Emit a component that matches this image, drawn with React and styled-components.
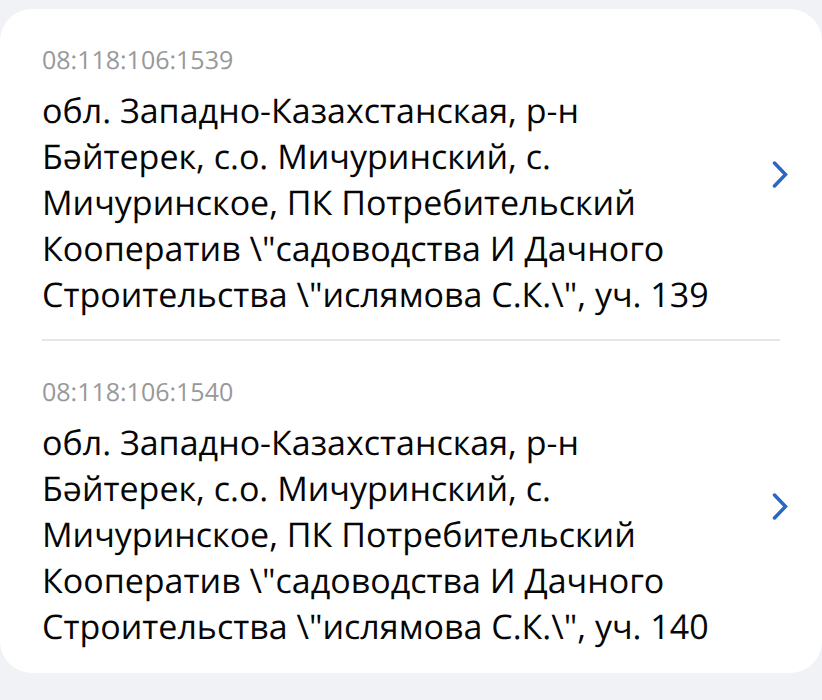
import React from "react";
import styled, { createGlobalStyle } from "styled-components";

const GlobalStyle = createGlobalStyle`
  *, *::before, *::after { box-sizing: border-box; }
  body {
    margin: 0;
    background: #f0f2f6;
    font-family: "Open Sans", "Noto Sans", sans-serif;
    color: #060607;
    text-rendering: geometricPrecision;
  }
`;

const Page = styled.main`
  padding: 9px 0 27px;
`;

const Card = styled.ul`
  margin: 0;
  padding: 0 42px 2px;
  list-style: none;
  background: #ffffff;
  border-radius: 32px;
`;

const Item = styled.li`
  & + & {
    border-top: 2px solid #e6e6e6;
  }
`;

const Row = styled.a`
  display: flex;
  align-items: center;
  justify-content: space-between;
  margin-right: -8px;
  color: inherit;
  text-decoration: none;
`;

const Details = styled.div`
  flex: 1;
  max-width: 680px;
  padding: 34px 0 22px;
`;

const Code = styled.div`
  margin-bottom: 10px;
  font-size: 25px;
  line-height: 34px;
  color: #98989a;
`;

const Address = styled.div`
  font-size: 34px;
  line-height: 46px;
`;

const Chevron = styled.svg`
  flex: none;
  width: 16px;
  height: 28px;
  fill: none;
  stroke: #2868c4;
  stroke-width: 3.5;
  stroke-linecap: round;
`;

const parcels = [
  {
    code: "08:118:106:1539",
    address:
      'обл. Западно-Казахстанская, р-н Бәйтерек, с.о. Мичуринский, с. Мичуринское, ПК Потребительский Кооператив \\"садоводства И Дачного Строительства \\"ислямова С.К.\\", уч. 139',
  },
  {
    code: "08:118:106:1540",
    address:
      'обл. Западно-Казахстанская, р-н Бәйтерек, с.о. Мичуринский, с. Мичуринское, ПК Потребительский Кооператив \\"садоводства И Дачного Строительства \\"ислямова С.К.\\", уч. 140',
  },
];

export default function App() {
  return (
    <>
      <GlobalStyle />
      <Page>
        <Card>
          {parcels.map((parcel) => (
            <Item key={parcel.code}>
              <Row href={`#${parcel.code}`}>
                <Details>
                  <Code>{parcel.code}</Code>
                  <Address>{parcel.address}</Address>
                </Details>
                <Chevron viewBox="0 0 16 28" aria-hidden="true">
                  <path d="M2.5 3 L13.5 14.5 L2.5 26" />
                </Chevron>
              </Row>
            </Item>
          ))}
        </Card>
      </Page>
    </>
  );
}
